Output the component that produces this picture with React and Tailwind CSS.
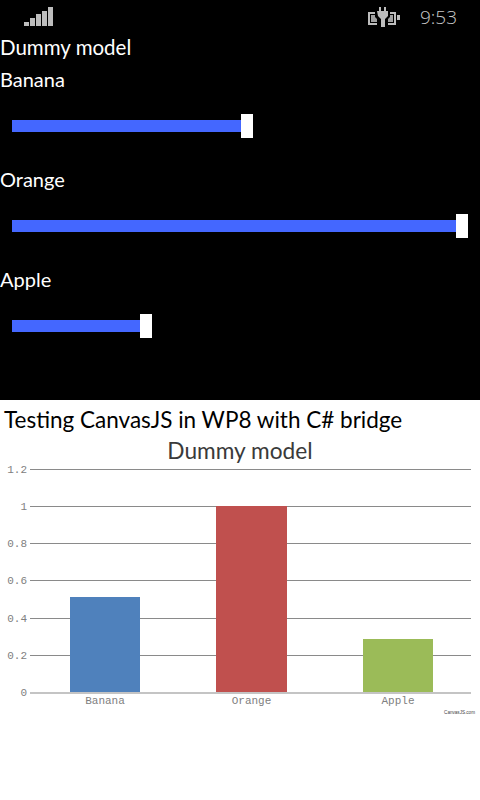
const fruits = [
  { name: 'Banana', fill: 229 },
  { name: 'Orange', fill: 444 },
  { name: 'Apple', fill: 128 },
]

const bars = [
  { name: 'Banana', x: 70, y: 597, w: 70, color: '#4f81bc' },
  { name: 'Orange', x: 216, y: 506, w: 71, color: '#c0504e' },
  { name: 'Apple', x: 363, y: 639, w: 70, color: '#9bbb58' },
]

const ticks = [
  { label: '1.2', y: 469 },
  { label: '1', y: 506 },
  { label: '0.8', y: 543 },
  { label: '0.6', y: 580 },
  { label: '0.4', y: 618 },
  { label: '0.2', y: 655 },
]

const StatusBar = () => (
  <div className="flex h-[32px] items-start text-[#bdbdbd]">
    <svg width="29" height="19" viewBox="0 0 29 19" className="ml-[24px] mt-[7px]" fill="#bdbdbd">
      <rect x="0" y="15" width="5" height="4" />
      <rect x="6" y="11" width="5" height="8" />
      <rect x="12" y="7" width="5" height="12" />
      <rect x="18" y="4" width="5" height="15" />
      <rect x="24" y="0" width="5" height="19" />
    </svg>
    <svg width="32" height="20" viewBox="0 0 32 20" className="ml-[315px] mt-[7px]" fill="#bdbdbd">
      <rect x="1" y="6" width="26" height="11" fill="none" stroke="#bdbdbd" strokeWidth="2" />
      <rect x="3" y="8" width="22" height="7" fill="#a0a0a0" />
      {/* gap round the plug */}
      <path d="M7 3h15v7l-2 2v6H9v-6l-2-2z" fill="#000000" />
      <rect x="11" y="0" width="2" height="5" />
      <rect x="16" y="0" width="2" height="5" />
      <path d="M9 4h11v5l-3 3v8h-4v-8l-3-3z" />
      <rect x="29" y="8" width="3" height="5" />
    </svg>
    <span className="ml-[20px] mt-[5px] font-['Open_Sans',sans-serif] text-[19px] font-light leading-[24px] text-[#c8c8c8]">9:53</span>
  </div>
)

const SliderRow = ({ name, fill }) => (
  <div className="h-[100px]">
    <div className="text-[20px] leading-[30px]">{name}</div>
    <div className="mt-[20px] flex items-center pl-[12px]">
      <div className="h-[12px] bg-[#4467ff]" style={{ width: fill }} />
      <div className="h-[24px] w-[12px] bg-white" />
    </div>
  </div>
)

const Chart = () => (
  <svg width="480" height="364" viewBox="0 436 480 364">
    <text x="240" y="459" textAnchor="middle" fontSize="22.7" fill="#3a3a3a" fontFamily="Lato, sans-serif">Dummy model</text>
    {ticks.map(t => (
      <g key={t.label}>
        <line x1="30" x2="471" y1={t.y + 0.5} y2={t.y + 0.5} stroke="#8a8a8a" strokeWidth="1" />
        <text x="27" y={t.y + 3.5} textAnchor="end" fontSize="11" fill="#808080" fontFamily="Liberation Mono, monospace">{t.label}</text>
      </g>
    ))}
    <text x="27" y="695.5" textAnchor="end" fontSize="11" fill="#808080" fontFamily="Liberation Mono, monospace">0</text>
    {bars.map(b => (
      <g key={b.name}>
        <rect x={b.x} y={b.y} width={b.w} height={692.5 - b.y} fill={b.color} />
        <text x={b.x + b.w / 2} y="704" textAnchor="middle" fontSize="11" fill="#808080" fontFamily="Liberation Mono, monospace">{b.name}</text>
      </g>
    ))}
    <rect x="30" y="692" width="441" height="2" fill="#c4c4c4" />
    <text x="475" y="714" textAnchor="end" fontSize="4.6" fill="#444444" fontFamily="Liberation Sans, sans-serif">CanvasJS.com</text>
  </svg>
)

const App = () => {
  return (
    <div className="h-[800px] w-[480px] overflow-hidden bg-white font-['Lato',sans-serif]">
      <div className="h-[400px] bg-black text-white">
        <StatusBar />
        <div className="h-[32px] text-[20.5px] leading-[30px]">Dummy model</div>
        {fruits.map(f => <SliderRow key={f.name} name={f.name} fill={f.fill} />)}
      </div>
      <div className="h-[36px] pl-[4px] text-[22.5px] leading-[40px] text-black">Testing CanvasJS in WP8 with C# bridge</div>
      <Chart />
    </div>
  )
}

export default App
